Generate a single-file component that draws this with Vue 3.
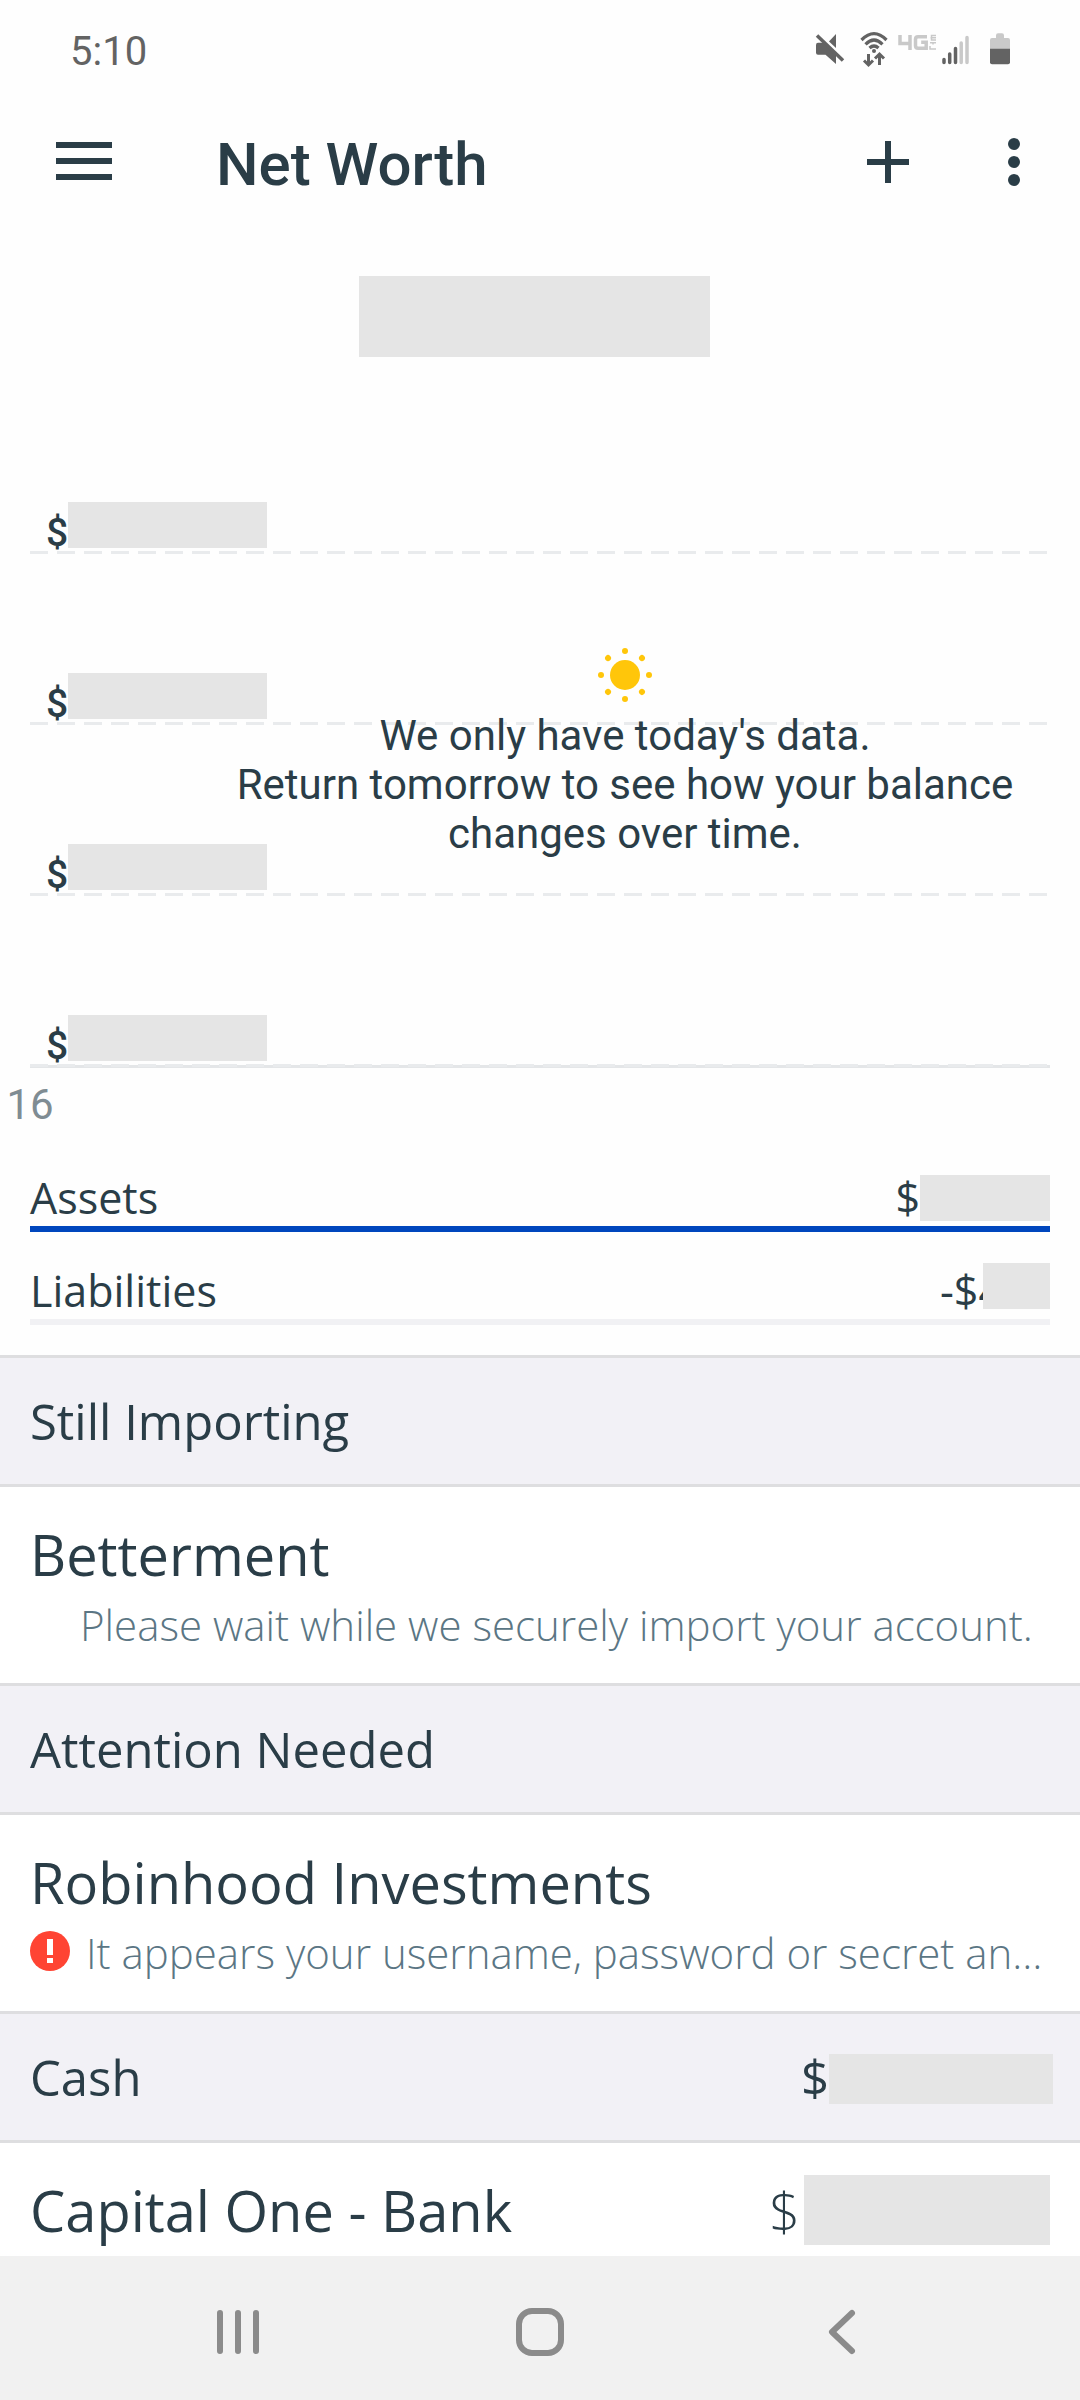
<script setup>
const gridRows = [1, 2, 3, 4]
const sunRays = [0, 45, 90, 135, 180, 225, 270, 315]
</script>

<template>
  <div class="app">
    <div class="status">
      <span class="time">5:10</span>
      <svg class="status-icons" width="198" height="40" viewBox="0 0 198 40" aria-hidden="true">
        <!-- muted speaker -->
        <g fill="#636363">
          <path d="M4 14q0-2.300 2-2.300h6L24 22.500V33l-10.500-9.300H6q-2 0-2-2z" />
          <path d="M17 10.500 24 3V17z" />
        </g>
        <path d="M5 4.500 31 29.500" stroke="#636363" stroke-width="3.500" />
        <!-- wifi with transfer arrows -->
        <g fill="none" stroke="#636363" stroke-width="3.200">
          <path d="M49.500 9q12.500-12.500 25 0" />
          <path d="M53.500 13.300q8.500-8.500 17 0" />
          <path d="M57.500 17q4.500-4 9 0" />
          <path d="M56.500 23v11M52 29.500l4.500 4.500 4.500-4.500M67.500 34V23M63 27.500l4.500-4.500 4.500 4.500" stroke-width="3" />
        </g>
        <circle cx="62" cy="20" r="2" fill="#636363" />
        <!-- network badge -->
        <g fill="none" stroke="#c9c9c9" stroke-width="3.500">
          <path d="M88 4v8.500h11M98 4v15" />
          <path d="M115 5.700h-9q-2.500 0-2.500 2.500v6.500q0 2.500 2.500 2.500h8.200v-6h-5" />
          <path d="M124 4.500h-4.500v4.500h4.500M118.500 6.700h5.500M118 11.800h6M121 11.500v2M118 15v3h6" stroke-width="1.500" />
        </g>
        <!-- signal strength -->
        <g stroke-width="3.500" stroke-linecap="round">
          <path d="M132 28.500v3M137.700 23V31.500M143.500 17.500V31.500" stroke="#636363" />
          <path d="M149.200 12V31.500M155 6.500V31.500" stroke="#c9c9c9" />
        </g>
        <!-- battery -->
        <path d="M184 4.500q0-2.200 2-2.200h4q2 0 2 2.200V7h4q2 0 2 2v10h-20V9q0-2 2-2h4z" fill="#c9c9c9" />
        <path d="M178 17.700h20V31.300q0 2-2 2h-16q-2 0-2-2z" fill="#636363" />
      </svg>
    </div>

    <header class="toolbar">
      <button class="icon-button" aria-label="Open menu">
        <svg width="56" height="40" viewBox="0 0 56 40"><path d="M0 3h56M0 19h56M0 35h56" stroke="#2a3d47" stroke-width="6" /></svg>
      </button>
      <h1>Net Worth</h1>
      <button class="icon-button" aria-label="Add account">
        <svg width="42" height="42" viewBox="0 0 42 42"><path d="M0 21h42M21 0v42" stroke="#2a3d47" stroke-width="6" /></svg>
      </button>
      <button class="icon-button more" aria-label="More options">
        <svg width="12" height="48" viewBox="0 0 12 48" fill="#2a3d47"><circle cx="6" cy="6" r="6" /><circle cx="6" cy="24" r="6" /><circle cx="6" cy="42" r="6" /></svg>
      </button>
    </header>

    <main>
      <div class="balance"><span class="mask balance-mask"></span></div>

      <section class="chart" aria-label="Net worth over time">
        <div v-for="row in gridRows" :key="row" class="grid-row">
          <div class="grid-label"><span>$</span><i class="mask grid-mask"></i></div>
          <div class="dashes"></div>
        </div>
        <div class="axis"></div>
        <div class="notice">
          <svg width="54" height="54" viewBox="0 0 54 54" fill="#ffc60a" aria-hidden="true">
            <circle cx="27" cy="27" r="15" />
            <circle v-for="angle in sunRays" :key="angle" cx="27" cy="3" r="3" :transform="`rotate(${angle} 27 27)`" />
          </svg>
          <p>We only have today's data.<br>Return tomorrow to see how your balance changes over time.</p>
        </div>
      </section>
      <div class="date">16</div>

      <section class="summary">
        <div class="summary-line">
          <span>Assets</span>
          <span class="amount">$<i class="mask assets-mask"></i></span>
        </div>
        <div class="bar assets-bar"></div>
        <div class="summary-line liabilities">
          <span>Liabilities</span>
          <span class="amount debt">-$4<i class="mask debt-mask"></i></span>
        </div>
        <div class="bar"></div>
      </section>

      <section>
        <h2>Still Importing</h2>
        <article class="account">
          <h3>Betterment</h3>
          <p class="note pending">Please wait while we securely import your account.</p>
        </article>
      </section>

      <section>
        <h2>Attention Needed</h2>
        <article class="account">
          <h3>Robinhood Investments</h3>
          <p class="note">
            <svg width="40" height="44" viewBox="0 0 40 44" aria-hidden="true">
              <circle cx="20" cy="20" r="20" fill="#ff4433" />
              <path d="M17 8h6v16h-6zM17 27h6v5h-6z" fill="#fff" />
            </svg>
            <span>It appears your username, password or secret an…</span>
          </p>
        </article>
      </section>

      <section>
        <h2><span>Cash</span><span class="amount">$<i class="mask cash-mask"></i></span></h2>
        <article class="account">
          <div class="account-line">
            <h3>Capital One - Bank</h3>
            <span class="amount bank">$<i class="mask bank-mask"></i></span>
          </div>
        </article>
      </section>
    </main>

    <nav class="system-nav" aria-label="System navigation">
      <button aria-label="Recent apps">
        <svg width="48" height="48" viewBox="0 0 48 48"><path d="M6 5v38M24 5v38M42 5v38" /></svg>
      </button>
      <button aria-label="Home">
        <svg width="48" height="48" viewBox="0 0 48 48"><rect x="3" y="3" width="42" height="42" rx="13" /></svg>
      </button>
      <button aria-label="Back">
        <svg width="48" height="48" viewBox="0 0 48 48"><path d="M34 5 14 24l20 19" /></svg>
      </button>
    </nav>
  </div>
</template>

<style>
body {
  background: #fefefe;
}
</style>

<style scoped>
.app {
  display: flex;
  flex-direction: column;
  height: 100vh;
  color: #2a3d47;
  background: #fefefe;
  font-family: "Open Sans", sans-serif;
  font-size: 42px;
}
h1, h2, h3, p {
  margin: 0;
  font-weight: 400;
}
svg {
  display: block;
  flex: none;
}
button {
  border: 0;
  padding: 0;
  background: none;
}
.mask {
  display: block;
  flex: none;
  background: #e5e5e5;
}
.status {
  display: flex;
  align-items: center;
  justify-content: space-between;
  flex: none;
  height: 102px;
  padding: 0 70px;
  font-family: Roboto, sans-serif;
}
.time {
  color: #636363;
  font-size: 40px;
}
.toolbar {
  display: flex;
  align-items: center;
  flex: none;
  height: 120px;
  padding: 0 60px 0 56px;
}
h1 {
  flex: 1;
  padding: 5px 0 0 104px;
  font: 500 60px/70px Roboto, sans-serif;
}
.more {
  margin-left: 99px;
}
main {
  flex: 1;
  min-height: 0;
  overflow: hidden;
}
.balance {
  display: flex;
  justify-content: center;
  padding: 54px 11px 26px 0;
}
.balance-mask {
  width: 351px;
  height: 81px;
}
.chart {
  position: relative;
  margin: 0 30px;
  font-family: Roboto, sans-serif;
}
.grid-row {
  display: flex;
  flex-direction: column;
  justify-content: flex-end;
  height: 171px;
}
.grid-label {
  display: flex;
  align-items: flex-end;
  padding: 0 0 3px 16px;
  font-size: 39px;
  font-weight: 500;
  line-height: 30px;
}
.grid-mask {
  width: 199px;
  height: 46px;
}
.dashes {
  height: 3px;
  background: repeating-linear-gradient(90deg, #e9ebed 0 18px, transparent 18px 27px);
}
.axis {
  height: 3px;
  margin-top: -2px;
  background: #e4e6e8;
}
.notice {
  position: absolute;
  top: 265px;
  right: 0;
  left: 170px;
  display: flex;
  flex-direction: column;
  align-items: center;
  gap: 9px;
  line-height: 49px;
  text-align: center;
}
.notice p {
  padding: 0 30px;
}
.date {
  width: 60px;
  margin-top: 12px;
  color: #7f8c93;
  font-family: Roboto, sans-serif;
  line-height: 49px;
  text-align: center;
}
.summary {
  padding: 46px 30px 30px;
  font-size: 43px;
}
.summary-line {
  display: flex;
  justify-content: space-between;
  height: 46px;
  line-height: 46px;
}
.liabilities {
  margin-top: 36px;
}
.amount {
  display: flex;
  align-items: center;
}
.assets-mask {
  width: 130px;
  height: 46px;
}
.debt {
  position: relative;
  padding-right: 47px;
}
.debt-mask {
  position: absolute;
  top: -5px;
  right: 0;
  width: 67px;
  height: 46px;
}
.bar {
  height: 6px;
  margin-top: 5px;
  background: #f1f1f4;
}
.assets-bar {
  background: #0046bd;
}
h2 {
  display: flex;
  align-items: center;
  justify-content: space-between;
  height: 126px;
  padding: 0 27px 0 30px;
  border: solid #dedee0;
  border-width: 3px 0;
  background: #f2f1f6;
  font-size: 49px;
}
.cash-mask {
  width: 224px;
  height: 50px;
  margin-top: 3px;
}
.account {
  padding: 31px 30px 29px;
  background: #fff;
}
h3 {
  font-size: 56px;
  line-height: 72px;
}
.note {
  display: flex;
  align-items: center;
  gap: 16px;
  margin-top: 5px;
  color: #5b7684;
  font-size: 42px;
  font-weight: 300;
  line-height: 60px;
  white-space: nowrap;
}
.pending {
  padding-left: 50px;
}
.account + .account,
.account:has(.note) {
  padding-bottom: 28px;
}
.account-line {
  display: flex;
  align-items: center;
  justify-content: space-between;
}
.bank {
  gap: 4px;
  font-size: 54px;
  font-weight: 300;
  line-height: 68px;
}
.bank-mask {
  width: 246px;
  height: 70px;
}
.system-nav {
  display: flex;
  justify-content: space-between;
  align-items: center;
  flex: none;
  height: 144px;
  padding: 8px 214px 0;
  box-sizing: border-box;
  background: #f1f1f1;
}
.system-nav svg {
  fill: none;
  stroke: #8b8b8b;
  stroke-width: 6px;
  stroke-linecap: round;
  stroke-linejoin: round;
}
</style>
